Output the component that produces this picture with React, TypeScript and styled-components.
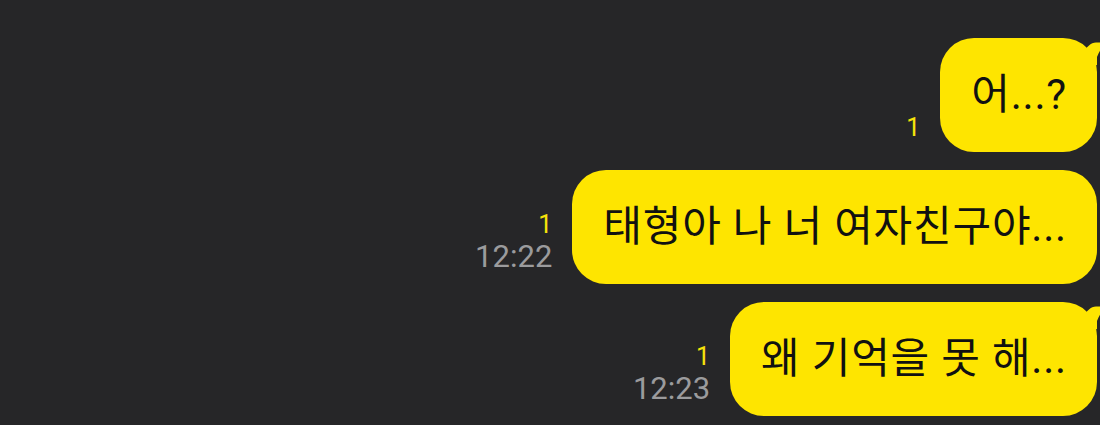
import React from "react";
import styled, { createGlobalStyle } from "styled-components";

const Global = createGlobalStyle`
  html, body {
    margin: 0;
    padding: 0;
    background: #262628;
    overflow: hidden;
  }
  #root {
    width: 1100px;
    height: 425px;
  }
`;

const Chat = styled.div`
  width: 1100px;
  height: 425px;
  box-sizing: border-box;
  background: #262628;
  padding: 38px 3px 0 0;
  display: flex;
  flex-direction: column;
  gap: 18px;
  overflow: hidden;
`;

const Row = styled.div`
  display: flex;
  justify-content: flex-end;
  align-items: flex-end;
  gap: 20px;
`;

const Meta = styled.div<{ $offset: number }>`
  display: flex;
  flex-direction: column;
  align-items: flex-end;
  margin-bottom: ${(p) => p.$offset}px;
  font-family: Roboto, "Noto Sans", sans-serif;
`;

const Unread = styled.span`
  color: #f6e20a;
  font-size: 25px;
  line-height: 30px;
`;

const Time = styled.span`
  color: #9b9b9d;
  font-size: 31px;
  line-height: 34px;
`;

const Bubble = styled.div`
  position: relative;
  background: #fee500;
  color: #111;
  border-radius: 34px;
  padding: 28px 30px 28px 31px;
  font-family: Roboto, "Noto Sans CJK KR", sans-serif;
  font-size: 42px;
  letter-spacing: 0.8px;
  line-height: 58px;
  white-space: nowrap;
`;

const Tail = styled.svg`
  position: absolute;
  left: calc(100% - 14px);
  top: 3px;
  width: 20px;
  height: 24px;
  overflow: visible;
`;

type Msg = {
  text: string;
  unread?: string;
  time?: string;
  tail?: boolean;
};

const messages: Msg[] = [
  { text: "어...?", unread: "1", tail: true },
  { text: "태형아 나 너 여자친구야...", unread: "1", time: "12:22" },
  { text: "왜 기억을 못 해...", unread: "1", time: "12:23", tail: true },
];

export default function App() {
  return (
    <>
      <Global />
      <Chat>
        {messages.map((m, i) => (
          <Row key={i}>
            <Meta $offset={m.time ? 10 : 9}>
              {m.unread && <Unread>{m.unread}</Unread>}
              {m.time && <Time>{m.time}</Time>}
            </Meta>
            <Bubble>
              {m.text}
              {m.tail && (
                <Tail viewBox="0 0 20 24">
                  <path
                    d="M0 13 C3 6 8 1.5 13 1.5 L22 1.5 C20 5 17 9 14 16 L14 24 L0 24 Z"
                    fill="#fee500"
                  />
                </Tail>
              )}
            </Bubble>
          </Row>
        ))}
      </Chat>
    </>
  );
}
